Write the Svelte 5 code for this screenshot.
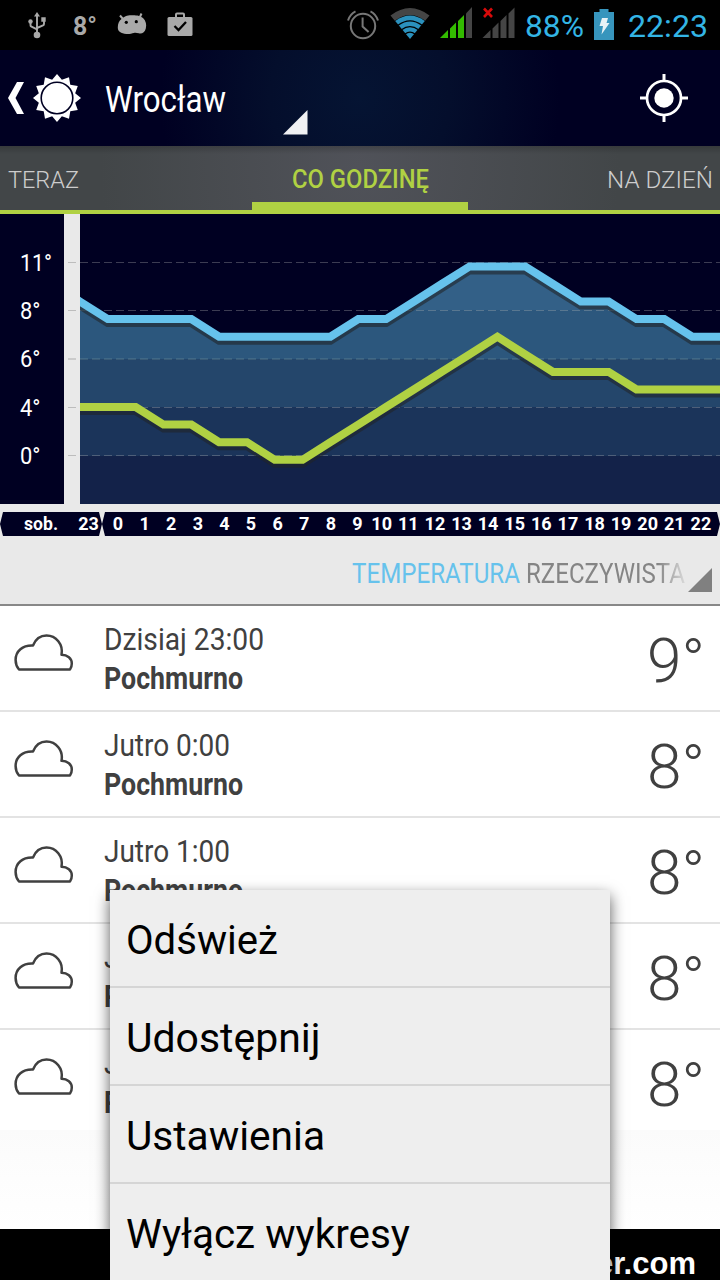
<script>
  const grid = [262.5, 310.5, 359, 407.5, 455.5];
  const axis = [
    { t: '11°', w: 32 },
    { t: '8°', w: 20.5 },
    { t: '6°', w: 20.5 },
    { t: '4°', w: 20.5 },
    { t: '0°', w: 20.5 }
  ];
  const bands = [
    { y: 214, h: 96, c: '#336087' },
    { y: 310, h: 49, c: '#2c577d' },
    { y: 359, h: 48, c: '#24466b' },
    { y: 407, h: 49, c: '#1b345a' },
    { y: 456, h: 48, c: '#132249' }
  ];
  const high = [2, 3, 3, 3, 3, 4, 4, 4, 4, 4, 3, 3, 2, 1, 0, 0, 0, 1, 2, 2, 3, 3, 4, 4];
  const low = [8, 8, 8, 9, 9, 10, 10, 11, 11, 10, 9, 8, 7, 6, 5, 4, 5, 6, 6, 6, 7, 7, 7, 7];
  const px = (n) => 80 + (n * 640) / 23;
  // The first and last segments are extended past the plot so the line caps are clipped flush.
  const points = (vals) => vals.map((v, n) => `${px(n).toFixed(1)} ${(266.4 + v * 17.58).toFixed(1)}`).join('L');
  const highPath = 'M52.2 284L' + points(high) + 'H740';
  const lowPath = 'M52.2 407L' + points(low) + 'H740';

  const hours = Array.from({ length: 23 }, (_, n) => ({
    t: String(n),
    x: 118 + n * 26.6 - (n > 9 ? 2.3 : 0)
  }));

  const rows = [
    { time: 'Dzisiaj 23:00', w: 160, deg: '9°' },
    { time: 'Jutro 0:00', w: 126, deg: '8°' },
    { time: 'Jutro 1:00', w: 126, deg: '8°' },
    { time: 'Jutro 2:00', w: 126, deg: '8°' },
    { time: 'Jutro 3:00', w: 126, deg: '8°' }
  ];
  const menu = [
    { t: 'Odśwież', w: 152 },
    { t: 'Udostępnij', w: 194.5 },
    { t: 'Ustawienia', w: 199 },
    { t: 'Wyłącz wykresy', w: 284 }
  ];

  const spikes = Array.from({ length: 24 }, (_, i) => {
    const r = i % 2 ? 18.8 : 24;
    const a = (i * Math.PI) / 12;
    return `${(24 + r * Math.sin(a)).toFixed(2)},${(24 - r * Math.cos(a)).toFixed(2)}`;
  }).join(' ');
</script>

{#snippet fit(t, w, h, base)}
  <svg class="fit" width={w} height={h}>
    <text x="0" y={base} textLength={w} lengthAdjust="spacingAndGlyphs">{t}</text>
  </svg>
{/snippet}

<div class="screen">
  <div class="status">
    <svg class="usb" width="20" height="28" viewBox="0 0 20 28">
      <g fill="none" stroke="#a9a9a9" stroke-width="1.900">
        <path d="M9 23V3M2.500 9v4.200q0 1 1 1.500L9 17.300M16 8v4q0 1-1 1.500L9 16" />
      </g>
      <g fill="#a9a9a9"><path d="M6 4.500 9 0l3 4.500z" /><circle cx="9" cy="23" r="3.300" /><circle cx="2.500" cy="9.500" r="2.200" /><path d="M13.300 5.300h4.400v4.400h-4.400z" /></g>
    </svg>
    <div class="st-temp">{@render fit('8°', 24, 50, 35)}</div>
    <svg class="droid" width="30" height="24" viewBox="0 0 30 24">
      <path d="M3 3.500 6 7M24.500 1.500 22.500 6" stroke="#a9a9a9" stroke-width="2" fill="none" />
      <path d="M4.500 7C8 3.500 12 3.200 15 3.200s8 0 11 2.800c3 3 3.800 6.500 2.800 10.500-1 4-3.800 5.500-7 4.800-2-.4-3-.9-5-.4-2 .4-4 1.200-7.500 1C4 21.500.8 19.500.8 15.500.8 11.500 2 9 4.500 7z" fill="#a9a9a9" />
      <circle cx="9.300" cy="10.300" r="1.600" /><circle cx="19.300" cy="9.700" r="1.600" />
    </svg>
    <svg class="bag" width="26" height="24" viewBox="0 0 26 24">
      <path d="M9 6V2.500q0-1 1-1h6q1 0 1 1V6" fill="none" stroke="#a9a9a9" stroke-width="2" />
      <rect x="0.500" y="5" width="25" height="19" rx="1.500" fill="#a9a9a9" />
      <path d="m7.500 14 4 4 7.500-8" fill="none" stroke="#000" stroke-width="2.300" />
    </svg>
    <svg class="alarm" width="32" height="32" viewBox="0 0 32 32">
      <g fill="none" stroke="#777" stroke-width="2">
        <circle cx="16" cy="18" r="12.200" />
        <path d="M15.600 9.500v9l6 5.500M1 12.500Q3 6 8.500 3.300M31 12.500Q29 6 23.500 3.300" />
      </g>
    </svg>
    <svg class="wifi" width="40" height="32" viewBox="0 0 40 32">
      <path d="M.5 8.500Q20-6.500 39.500 8.500l-4.300 5.200Q20 2.500 4.800 13.700z" fill="#454545" />
      <path d="M5.200 14Q20 3 34.800 14L20 32z" fill="#2b91bd" />
      <path d="M8 18.300Q20 9.500 32 18.300M11.500 22.800Q20 16.500 28.500 22.800M15 27q5-3.800 10 0" fill="none" stroke="#000" stroke-width="1.300" />
    </svg>
    <svg class="sig1" width="32" height="31" viewBox="0 0 32 31">
      <path d="M0 31 8 23v8zM10 31V21.500l6-6V31zM18 31V14l6-6v23z" fill="#3b0" />
      <path d="M26 31V6.500L32 0v31z" fill="#454545" />
    </svg>
    <svg class="sig2" width="34" height="31" viewBox="0 0 34 31">
      <path d="M1.500 31 9.500 23v8zM11.500 31V21.500l6-6V31zM19.500 31V14l6-6v23zM27.500 31V6.500l6-6V31z" fill="#454545" />
      <path d="m3 1.500 8 8.500M11 1.500 3 10" stroke="#d80a0a" stroke-width="2.600" />
    </svg>
    <div class="pct">{@render fit('88%', 59, 50, 37)}</div>
    <svg class="batt" width="20" height="31" viewBox="0 0 20 31">
      <path d="M5.500 0h9v3H20v28H0V3h5.500z" fill="#3795bd" />
      <path d="M8 9h6l-1.500 5H15.500l-8 11.500 1.500-8.500H5.500z" fill="#e8f2f6" />
    </svg>
    <div class="clock">{@render fit('22:23', 80, 50, 37)}</div>
  </div>

  <header>
    <svg class="back" width="17" height="32" viewBox="0 0 17 32"><path d="M9 0H16L7.500 16 16 32H9L0 16z" fill="#fff" /></svg>
    <svg class="sun" width="48" height="48" viewBox="0 0 48 48">
      <polygon points={spikes} fill="#fff" />
      <circle cx="24" cy="24" r="15.800" fill="#fff" stroke="#000022" stroke-width="1.600" />
    </svg>
    <div class="city">{@render fit('Wrocław', 121, 96, 62)}</div>
    <svg class="tri" width="25" height="25" viewBox="0 0 25 25"><path d="M0 24.500 24.500 0v24.500z" fill="#f0f1f3" /></svg>
    <svg class="locate" width="48" height="48" viewBox="0 0 48 48">
      <circle cx="24" cy="24" r="17" fill="none" stroke="#fff" stroke-width="2.700" />
      <circle cx="24" cy="24" r="9.700" fill="#fff" />
      <path d="M24 0v7M24 41v7M0 24h7M41 24h7" stroke="#fff" stroke-width="3" />
    </svg>
  </header>

  <nav>
    <div class="tab">{@render fit('TERAZ', 71, 64, 42)}</div>
    <div class="tab active">{@render fit('CO GODZINĘ', 137, 64, 42)}</div>
    <div class="tab last">{@render fit('NA DZIEŃ', 106, 64, 42)}</div>
  </nav>

  <section class="chart">
    <svg width="720" height="290" viewBox="0 214 720 290">
      <defs>
        <clipPath id="area"><path d="{highPath}V504H52z" /></clipPath>
        <clipPath id="plot"><rect x="80" y="214" width="640" height="290" /></clipPath>
      </defs>
      <rect y="214" width="720" height="290" fill="#000022" />
      <rect x="64" y="214" width="16" height="290" fill="#e9e9e9" />
      <g clip-path="url(#area)">
        {#each bands as b}<rect x="80" y={b.y} width="640" height={b.h} fill={b.c} />{/each}
      </g>
      {#each grid as y, i}
        <path d="M68 {y}h8" stroke="#bdbdbd" stroke-width={i === 2 ? 2 : 1} stroke-opacity={i === 2 ? 0.7 : 1} />
        <path d="M80 {y}H720" stroke={i === 2 ? '#8fb0a8' : '#bbb'} stroke-opacity={i === 2 ? 0.2 : 0.32} stroke-width={i === 2 ? 2 : 1} stroke-dasharray="8 4" />
        <text class="deg" x="20" y={y + 8} textLength={axis[i].w} lengthAdjust="spacingAndGlyphs">{axis[i].t}</text>
      {/each}
      <g clip-path="url(#plot)" fill="none" stroke-width="8">
        <path d={highPath} transform="translate(0 4)" stroke="#202428" stroke-opacity=".58" />
        <path d={highPath} stroke="#66c2ec" />
        <path d={lowPath} transform="translate(0 4)" stroke="#202428" stroke-opacity=".58" />
        <path d={lowPath} stroke="#b0d143" />
      </g>
    </svg>
  </section>

  <div class="hours">
    <svg width="720" height="24" viewBox="0 0 720 24">
      <path d="M3 0H99l3 12-3 12H3L0 12zM105 0H717l3 12-3 12H105l-3-12z" fill="#000022" />
      <text x="41" y="18" textLength="34" lengthAdjust="spacingAndGlyphs">sob.</text>
      <text x="88.500" y="18">23</text>
      {#each hours as h}<text x={h.x} y="18">{h.t}</text>{/each}
    </svg>
  </div>

  <div class="spinner">
    <div class="blue">{@render fit('TEMPERATURA', 168, 68, 47)}</div>
    <div class="grey">{@render fit('RZECZYWISTA', 159, 68, 47)}</div>
    <svg width="24" height="24" viewBox="0 0 24 24"><path d="M0 24 24 0v24z" fill="#808080" /></svg>
  </div>

  <ul class="list">
    {#each rows as r}
      <li>
        <svg class="cloud" width="60" height="38" viewBox="0 0 60 38">
          <path d="M5 35.500C2.500 32.500 1.600 29.500 1.600 26c0-9 7-15 17.400-14.500C21.500 5.500 26.500 1.600 32.500 1.600c9.500 0 17 8.500 15 19.200 6 0 10.300 3.700 10.300 8.700 0 2.500-.6 4.500-1.800 6z" fill="none" stroke="#404040" stroke-width="2.500" stroke-linejoin="round" />
        </svg>
        <div class="info">
          <div class="time">{@render fit(r.time, r.w, 50, 44)}</div>
          <div class="cond">{@render fit('Pochmurno', 139, 50, 33)}</div>
        </div>
        <div class="val">{@render fit(r.deg, 58, 104, 76)}</div>
      </li>
    {/each}
  </ul>
  <div class="tail"></div>
  <footer>{@render fit('er.com', 100, 51, 45)}</footer>

  <div class="menu">
    {#each menu as m}<div class="item">{@render fit(m.t, m.w, 96, 64)}</div>{/each}
  </div>
</div>

<style>
  :global(body) { margin: 0; background: #000; }
  .screen { position: relative; width: 720px; height: 1280px; overflow: hidden; display: flex; flex-direction: column; font-family: Roboto, sans-serif; background: #fff; }
  .screen > * { flex: none; box-sizing: border-box; }
  svg { display: block; flex: none; }
  .fit { overflow: visible; }
  .fit text { fill: currentColor; }

  .status { height: 50px; background: #000; display: flex; align-items: flex-start; color: #33b5e5; font-size: 32px; }
  .usb { margin: 12px 0 0 28px; }
  .st-temp { margin-left: 25px; color: #a9a9a9; font-size: 26px; font-weight: 700; }
  .droid { margin: 12px 0 0 20px; }
  .bag { margin: 12px 0 0 20px; }
  .alarm { margin: 8px 0 0 154px; }
  .wifi { margin: 7px 0 0 11px; }
  .sig1 { margin: 7px 0 0 10px; }
  .sig2 { margin: 7px 0 0 9px; }
  .pct { margin-left: 10px; }
  .batt { margin: 9px 0 0 10px; }
  .clock { margin-left: 14px; }

  header { height: 96px; display: flex; align-items: flex-start; color: #fff; background: radial-gradient(circle at 360px 48px, #051433 0, #040e2c 90px, #000022 200px); font-size: 37px; }
  .back { margin: 32px 0 0 8px; }
  .sun { margin: 24px 0 0 8px; }
  .city { margin-left: 24px; }
  .tri { margin: 60px 0 0 57px; }
  .locate { margin: 24px 32px 0 auto; }

  nav { height: 68px; display: grid; grid-template-columns: 252px 216px 252px; border-bottom: 4px solid #b0d143; background: linear-gradient(rgba(0, 0, 0, .18), rgba(0, 0, 0, 0) 8px), radial-gradient(circle at 360px 20px, #505259, #424648 260px); font-size: 24px; font-weight: 350; color: #cdcdcd; }
  .tab { display: flex; height: 64px; padding: 0 8px; box-sizing: border-box; }
  .tab.active { justify-content: center; color: #b0d143; font-size: 25px; font-weight: 500; padding: 0; box-shadow: inset 0 -8px #b0d143; }
  .tab.last { justify-content: flex-end; padding-right: 7px; }

  .chart { height: 290px; }
  .deg { fill: #fff; font-size: 24px; font-weight: 450; }

  .hours { height: 32px; padding-top: 8px; background: #e9e9e9; }
  .hours text { fill: #fff; font-size: 18px; font-weight: 700; text-anchor: middle; }

  .spinner { height: 70px; display: flex; background: #e9e9e9; border-bottom: 2px solid #888; padding-left: 352px; gap: 6px; font-size: 28px; }
  .blue { color: #66c2ec; }
  .grey { color: #858585; -webkit-mask-image: linear-gradient(90deg, #000 132px, transparent 164px); mask-image: linear-gradient(90deg, #000 132px, transparent 164px); }
  .spinner > svg { margin: 32px 0 0 -3px; }

  .list { list-style: none; margin: 0; padding: 0; height: 524px; color: #404040; }
  li { height: 106px; box-sizing: border-box; display: flex; border-bottom: 2px solid #e3e3e3; }
  li:last-child { border-bottom: 0; }
  .cloud { margin: 28px 0 0 14px; }
  .info { display: flex; flex-direction: column; margin-left: 30px; font-size: 31px; }
  .cond { font-weight: 700; }
  .val { margin: 0 15px 0 auto; font-size: 62px; font-weight: 300; }

  .tail { height: 99px; background: linear-gradient(#fbfbfb, #fff); }
  footer { height: 51px; background: #000; color: #fff; padding-left: 596px; font: bold 31px "Liberation Sans", sans-serif; }

  .menu { position: absolute; left: 110px; top: 890px; width: 500px; background: #eee; box-shadow: 0 6px 14px rgba(0, 0, 0, .65); color: #000; font-size: 40px; }
  .item { height: 98px; box-sizing: border-box; padding-left: 16px; border-bottom: 2px solid #d5d5d5; }
</style>
